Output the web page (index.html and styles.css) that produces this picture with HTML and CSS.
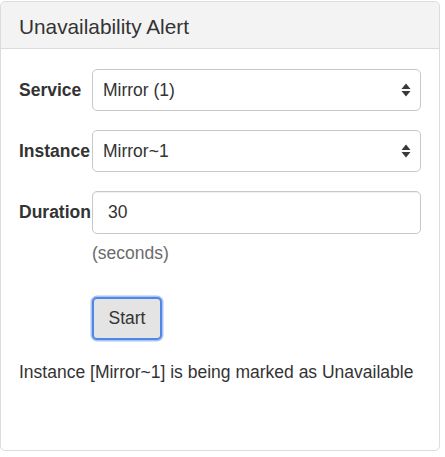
FILE: index.html
```html
<!DOCTYPE html>
<html>
<head>
<meta charset="utf-8">
<link rel="stylesheet" href="styles.css">
</head>
<body>
<div class="panel">
  <div class="panel-heading">
    <h3 class="panel-title">Unavailability Alert</h3>
  </div>
  <div class="panel-body">
    <form class="form">
      <div class="row">
        <label class="label">Service</label>
        <div class="select-wrap">
          <select class="control select"><option>Mirror (1)</option></select>
          <svg class="arrows" width="10" height="14" viewBox="0 0 10 14"><path d="M5 0.5 L9.5 6 L0.5 6 Z M0.5 8 L9.5 8 L5 13.5 Z" fill="#3a3a3a"/></svg>
        </div>
      </div>
      <div class="row">
        <label class="label">Instance</label>
        <div class="select-wrap">
          <select class="control select"><option>Mirror~1</option></select>
          <svg class="arrows" width="10" height="14" viewBox="0 0 10 14"><path d="M5 0.5 L9.5 6 L0.5 6 Z M0.5 8 L9.5 8 L5 13.5 Z" fill="#3a3a3a"/></svg>
        </div>
      </div>
      <div class="row">
        <label class="label">Duration</label>
        <input class="control input" type="text" value="30">
      </div>
      <div class="row row-help">
        <span></span>
        <span class="help">(seconds)</span>
      </div>
      <div class="row row-btn">
        <span></span>
        <div><button type="button" class="btn">Start</button></div>
      </div>
    </form>
    <p class="message">Instance [Mirror~1] is being marked as Unavailable</p>
  </div>
</div>
</body>
</html>
```
FILE: styles.css
```css
html, body {
  margin: 0;
  padding: 0;
  background: #fff;
}
body {
  font-family: "Liberation Sans", Arial, Helvetica, sans-serif;
  font-size: 17.5px;
  color: #333;
  padding-top: 1px;
}
.panel {
  margin: 0 5px 0 0;
  width: 440px;
  box-sizing: border-box;
  border: 1px solid #dcdcdc;
  border-radius: 5px;
  background: #fff;
}
.panel-heading {
  background: #f3f3f3;
  border-bottom: 1px solid #dcdcdc;
  border-radius: 5px 5px 0 0;
  padding: 13px 18px 10px 18px;
}
.panel-title {
  margin: 0;
  font-size: 20.8px;
  font-weight: normal;
  line-height: 23px;
  color: #333;
}
.panel-body {
  padding: 20px 18px 65px 18px;
}
.form {
  display: flex;
  flex-direction: column;
  gap: 19px;
  margin: 0;
}
.row {
  display: grid;
  grid-template-columns: 73px 1fr;
  align-items: center;
}
.label {
  font-weight: bold;
  white-space: nowrap;
}
.select-wrap {
  position: relative;
}
.control {
  display: block;
  width: 100%;
  box-sizing: border-box;
  height: 42px;
  margin: 0;
  font-family: inherit;
  font-size: 17.5px;
  color: #333;
  border: 1px solid #c8c8c8;
  border-radius: 5px;
  background: #fff;
  outline: none;
}
.select {
  -webkit-appearance: none;
  appearance: none;
  padding: 0 30px 0 10px;
}
.arrows {
  position: absolute;
  right: 10px;
  top: 14px;
}
.input {
  padding: 0 15px;
  height: 43px;
  box-shadow: inset 0 1px 1px rgba(0, 0, 0, 0.06);
}
.row-help {
  margin-top: -12px;
}
.help {
  color: #6b6b6b;
  line-height: 25px;
}
.row-btn {
  margin-top: 12px;
}
.btn {
  display: block;
  width: 70px;
  height: 43px;
  box-sizing: border-box;
  font-family: inherit;
  font-size: 17.5px;
  color: #333;
  background: #e4e4e4;
  border: 2px solid #4f87e6;
  border-radius: 5px;
  box-shadow: 0 0 0 1.5px #a8c5f5;
  padding: 0;
}
.message {
  margin: 20px 0 0 0;
  line-height: 25px;
}
```
